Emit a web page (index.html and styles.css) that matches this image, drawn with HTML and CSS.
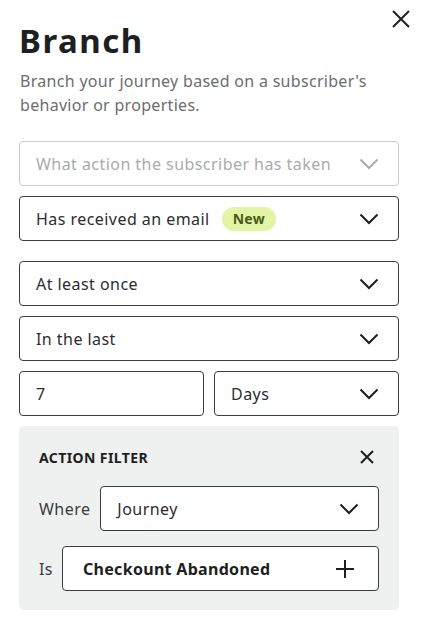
FILE: index.html
```html
<!DOCTYPE html>
<html>
<head>
<meta charset="utf-8">
<link rel="stylesheet" href="styles.css">
</head>
<body>
<div class="panel">
  <div class="top">
    <h1 class="title">Branch</h1>
    <button class="close" aria-label="Close">
      <svg width="20" height="20" viewBox="0 0 20 20"><path d="M2 2L18 18M18 2L2 18" stroke="#1d1f22" stroke-width="2" fill="none"/></svg>
    </button>
  </div>
  <p class="desc">Branch your journey based on a subscriber's behavior or properties.</p>

  <div class="field placeholder">
    <span class="label">What action the subscriber has taken</span>
    <svg class="chev" width="20" height="12" viewBox="0 0 20 12"><path d="M1.5 1.5L10 10L18.5 1.5" stroke="currentColor" stroke-width="2" fill="none"/></svg>
  </div>
  <div class="field gap-s">
    <span class="label">Has received an email <span class="badge">New</span></span>
    <svg class="chev" width="20" height="12" viewBox="0 0 20 12"><path d="M1.5 1.5L10 10L18.5 1.5" stroke="currentColor" stroke-width="2" fill="none"/></svg>
  </div>
  <div class="field gap-l">
    <span class="label">At least once</span>
    <svg class="chev" width="20" height="12" viewBox="0 0 20 12"><path d="M1.5 1.5L10 10L18.5 1.5" stroke="currentColor" stroke-width="2" fill="none"/></svg>
  </div>
  <div class="field gap-s">
    <span class="label">In the last</span>
    <svg class="chev" width="20" height="12" viewBox="0 0 20 12"><path d="M1.5 1.5L10 10L18.5 1.5" stroke="currentColor" stroke-width="2" fill="none"/></svg>
  </div>
  <div class="row gap-s">
    <div class="field">
      <span class="label">7</span>
    </div>
    <div class="field">
      <span class="label">Days</span>
      <svg class="chev" width="20" height="12" viewBox="0 0 20 12"><path d="M1.5 1.5L10 10L18.5 1.5" stroke="currentColor" stroke-width="2" fill="none"/></svg>
    </div>
  </div>

  <div class="filter gap-s">
    <div class="filter-head">
      <span class="filter-title">ACTION FILTER</span>
      <svg width="14" height="14" viewBox="0 0 14 14"><path d="M1 1L13 13M13 1L1 13" stroke="#1d1f22" stroke-width="2" fill="none"/></svg>
    </div>
    <div class="filter-row">
      <span class="filter-label">Where</span>
      <div class="field">
        <span class="label">Journey</span>
        <svg class="chev" width="20" height="12" viewBox="0 0 20 12"><path d="M1.5 1.5L10 10L18.5 1.5" stroke="currentColor" stroke-width="2" fill="none"/></svg>
      </div>
    </div>
    <div class="filter-row is-row">
      <span class="filter-label">Is</span>
      <div class="field">
        <span class="label strong">Checkount Abandoned</span>
        <svg class="plus" width="20" height="20" viewBox="0 0 20 20"><path d="M10 1V19M1 10H19" stroke="#1d1f22" stroke-width="2" fill="none"/></svg>
      </div>
    </div>
  </div>
</div>
</body>
</html>
```

FILE: styles.css
```css
* { box-sizing: border-box; }
body {
  margin: 0;
  background: #fff;
  font-family: "Noto Sans", "Open Sans", sans-serif;
  color: #1d1f22;
}
.panel {
  padding: 9px 22px 0 19px;
}
.top {
  display: flex;
  justify-content: space-between;
  align-items: flex-start;
  margin-right: -12px;
}
.close {
  border: 0;
  background: none;
  padding: 0;
  width: 20px;
  height: 20px;
  display: block;
  cursor: pointer;
}
.close svg { display: block; }
.title {
  margin: 16px 0 0 0;
  font-size: 33px;
  line-height: 32px;
  font-weight: 700;
  letter-spacing: 1.5px;
  color: #1d1f22;
}
.desc {
  margin: 12px 0 0 1px;
  font-size: 16px;
  line-height: 24px;
  letter-spacing: 0.3px;
  color: #6b6d70;
}
.field {
  height: 45px;
  border: 1px solid #3a3c40;
  border-radius: 4px;
  background: #fff;
  display: flex;
  align-items: center;
  justify-content: space-between;
  padding: 0 19px 0 16px;
}
.desc + .field { margin-top: 24px; }
.field.placeholder {
  border-color: #c9cacc;
  color: #a9abae;
}
.label {
  font-size: 16px;
  letter-spacing: 0.45px;
  color: #2b2d30;
  display: flex;
  align-items: center;
}
.placeholder .label { color: #a9abae; }
.label.strong { font-weight: 700; letter-spacing: 0.3px; color: #1d1f22; }
.chev { display: block; color: #1d1f22; }
.placeholder .chev { color: #a9abae; }
.badge {
  margin-left: 12px;
  background: #e3f5a5;
  color: #4a5a1a;
  font-size: 14px;
  font-weight: 700;
  letter-spacing: 0.3px;
  height: 24px;
  border-radius: 12px;
  padding: 0 11px;
  display: inline-flex;
  align-items: center;
}
.gap-s { margin-top: 10px; }
.gap-l { margin-top: 20px; }
.row {
  display: grid;
  grid-template-columns: 1fr 1fr;
  gap: 10px;
}
.filter {
  background: #eff0f0;
  border-radius: 5px;
  padding: 20px 20px 19px 20px;
}
.filter-head {
  display: flex;
  justify-content: space-between;
  align-items: center;
  height: 22px;
  padding-right: 5px;
}
.filter-title {
  font-size: 14px;
  font-weight: 700;
  letter-spacing: 0.4px;
}
.filter-row {
  display: flex;
  align-items: center;
  margin-top: 18px;
}
.filter-row .field { flex: 1; }
.is-row { margin-top: 15px; }
.filter-label {
  font-size: 16px;
  letter-spacing: 0.45px;
  color: #3a3c40;
  margin-right: 10px;
}
.is-row .filter-label { margin-right: 9px; }
.is-row .field { padding-left: 20px; padding-right: 23px; }
.plus { display: block; }
```
